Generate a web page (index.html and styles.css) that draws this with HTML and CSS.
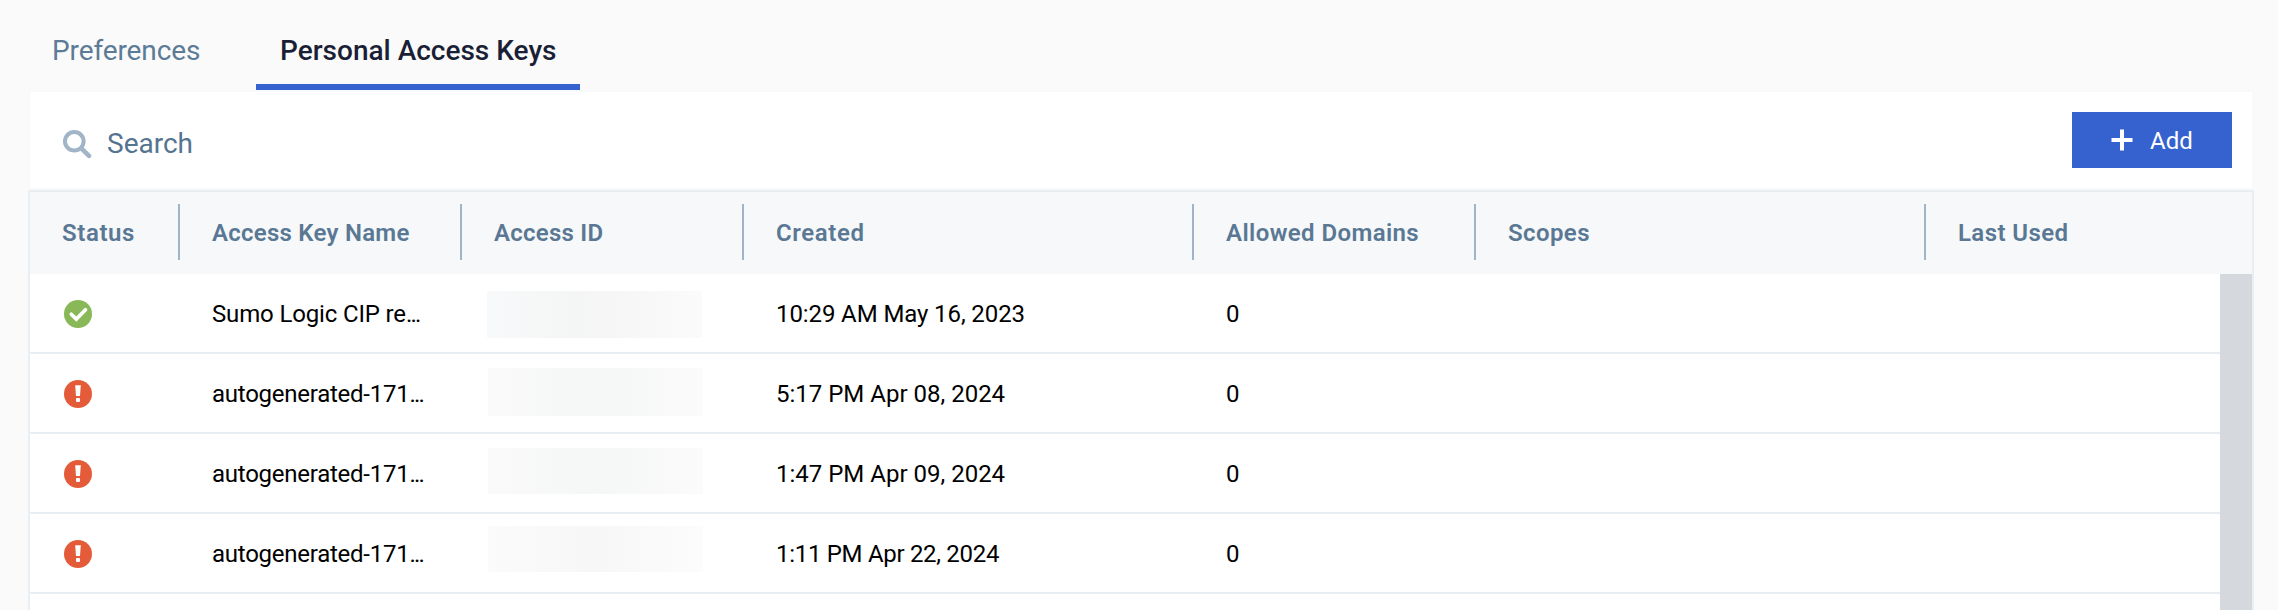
FILE: index.html
```html
<!DOCTYPE html>
<html lang="en">
<head>
<meta charset="utf-8">
<title>Personal Access Keys</title>
<link rel="stylesheet" href="styles.css">
</head>
<body>
<svg width="0" height="0" class="defs">
  <symbol id="ok" viewBox="0 0 28 28">
    <circle cx="14" cy="14" r="14" fill="#88b857"/>
    <path d="M7.3 14.2l5 4.9 9.2-9.3" fill="none" stroke="#fff" stroke-width="3.7" stroke-linecap="round"/>
  </symbol>
  <symbol id="warn" viewBox="0 0 28 28">
    <circle cx="14" cy="14" r="14" fill="#e35b38"/>
    <path d="M11.2 5.3h5.6l-.8 10.7h-4z" fill="#fff"/>
    <rect x="12" y="18" width="4" height="4" rx="1" fill="#fff"/>
  </symbol>
</svg>
<nav class="tabs">
  <a class="tab">Preferences</a>
  <a class="tab active">Personal Access Keys</a>
</nav>
<main class="panel">
  <div class="toolbar">
    <label class="search">
      <svg class="search-icon" viewBox="0 0 29 29"><circle cx="11.3" cy="11.3" r="9.3" fill="none" stroke="#a1b4c8" stroke-width="4"/><path d="M18.6 18.6l7.4 7.2" stroke="#a1b4c8" stroke-width="4.6" stroke-linecap="round"/></svg>
      <span>Search</span>
    </label>
    <button class="add">
      <svg class="plus" viewBox="0 0 22 22"><path d="M11 .5v21M.5 11h21" stroke="#fff" stroke-width="4"/></svg>
      <span>Add</span>
    </button>
  </div>
  <section class="table">
    <div class="row head">
      <div class="cell wide">Status</div><div class="cell tight">Access Key Name</div><div class="cell tight">Access ID</div><div class="cell wide">Created</div><div class="cell">Allowed Domains</div><div class="cell">Scopes</div><div class="cell">Last Used</div>
    </div>
    <div class="body">
      <div class="rows">
        <div class="row">
          <div class="cell"><svg class="status"><use href="#ok"/></svg></div>
          <div class="cell name">Sumo Logic CIP re<span class="dots">...</span></div>
          <div class="cell id"><span class="mask first"></span></div>
          <div class="cell date">10:29 AM May 16, 2023</div><div class="cell">0</div>
        </div>
        <div class="row">
          <div class="cell"><svg class="status"><use href="#warn"/></svg></div>
          <div class="cell name long">autogenerated-171<span class="dots">...</span></div>
          <div class="cell id"><span class="mask second"></span></div>
          <div class="cell date loose">5:17 PM Apr 08, 2024</div><div class="cell">0</div>
        </div>
        <div class="row">
          <div class="cell"><svg class="status"><use href="#warn"/></svg></div>
          <div class="cell name long">autogenerated-171<span class="dots">...</span></div>
          <div class="cell id"><span class="mask third"></span></div>
          <div class="cell date loose">1:47 PM Apr 09, 2024</div><div class="cell">0</div>
        </div>
        <div class="row">
          <div class="cell"><svg class="status"><use href="#warn"/></svg></div>
          <div class="cell name long">autogenerated-171<span class="dots">...</span></div>
          <div class="cell id"><span class="mask fourth"></span></div>
          <div class="cell date narrow">1:11 PM Apr 22, 2024</div><div class="cell">0</div>
        </div>
      </div>
      <div class="scrollbar"></div>
    </div>
  </section>
</main>
</body>
</html>
```
FILE: styles.css
```css
* { box-sizing: border-box; }
body {
  margin: 0;
  height: 610px;
  overflow: hidden;
  background: #fafafa;
  color: #000;
  font: 24px/30px Roboto, sans-serif;
}
.defs { display: block; }
.tabs {
  display: flex;
  gap: 33px;
  height: 90px;
  padding-left: 28px;
}
.tab {
  width: 195px;
  padding: 34px 0 0 24px;
  border-bottom: 6px solid transparent;
  color: #5c7b96;
  font-size: 28px;
  line-height: 34px;
  letter-spacing: -0.1px;
}
.tab.active {
  width: 324px;
  border-color: #3562cf;
  color: #1a1f36;
  font-weight: 500;
  letter-spacing: 0;
}
.panel {
  width: 2226px;
  margin-left: 28px;
}
.toolbar {
  display: flex;
  justify-content: space-between;
  height: 100px;
  padding: 20px 20px 0 33px;
  border: 2px solid #f8f9fa;
  background: #fff;
}
.search {
  display: flex;
  gap: 15px;
  color: #557490;
  font-size: 28px;
  line-height: 34px;
}
.search-icon { width: 29px; height: 29px; margin-top: 18px; }
.search span { padding-top: 15px; }
.add {
  display: flex;
  align-items: center;
  gap: 17px;
  width: 160px;
  height: 56px;
  padding: 0 0 0 39px;
  border: 0;
  background: #3562cf;
  color: #fff;
  font: inherit;
}
.plus { width: 22px; height: 22px; }
.add span { padding-top: 2px; }
.table {
  height: 430px;
  border: 2px solid #e9eef2;
  border-bottom: 0;
  background: #fff;
}
.row {
  display: grid;
  grid-template-columns: 148px 282px 282px 450px 282px 450px 1fr;
  height: 80px;
  border-bottom: 2px solid #e9eef2;
}
.cell {
  display: flex;
  align-items: center;
  padding: 2px 0 0 34px;
}
.cell:first-child { padding-left: 32px; }
.head {
  height: 82px;
  padding: 12px 0 14px;
  border: 0;
  background: #f6f8fa;
  color: #5a7894;
  font-weight: 600;
  letter-spacing: 0.4px;
}
.head .cell + .cell {
  padding-left: 32px;
  border-left: 2px solid #a1b4c8;
}
.head .tight { letter-spacing: 0.25px; }
.head .wide { letter-spacing: 0.6px; }
.body { display: flex; }
.rows { flex: 1; }
.scrollbar { width: 32px; height: 340px; background: #d5d9de; }
.status { width: 28px; height: 28px; margin-left: 2px; }
.name { letter-spacing: -0.15px; }
.name.long { letter-spacing: -0.25px; }
.name .dots { letter-spacing: -1.8px; }
.date { letter-spacing: -0.1px; }
.date.loose { letter-spacing: 0; }
.date.narrow { letter-spacing: -0.3px; }
.cell.id { align-items: flex-start; padding: 0 0 0 27px; }
.mask {
  width: 215px;
  height: 47px;
  background: linear-gradient(90deg, #fafafb, #f5f6f6 50%, #fbfbfb);
}
.first { margin-top: 17px; background: linear-gradient(90deg, #f8f9fa, #f4f5f5 40%, #f6f6f6 60%, #fbfbfb); }
.second { height: 48px; margin-top: 14px; }
.third { height: 46px; margin-top: 14px; }
.fourth { height: 46px; margin-top: 12px; background: linear-gradient(90deg, #fbfbfb, #f7f7f7 50%, #fcfcfc); }
.row + .row .cell.id { padding-left: 28px; }
```
